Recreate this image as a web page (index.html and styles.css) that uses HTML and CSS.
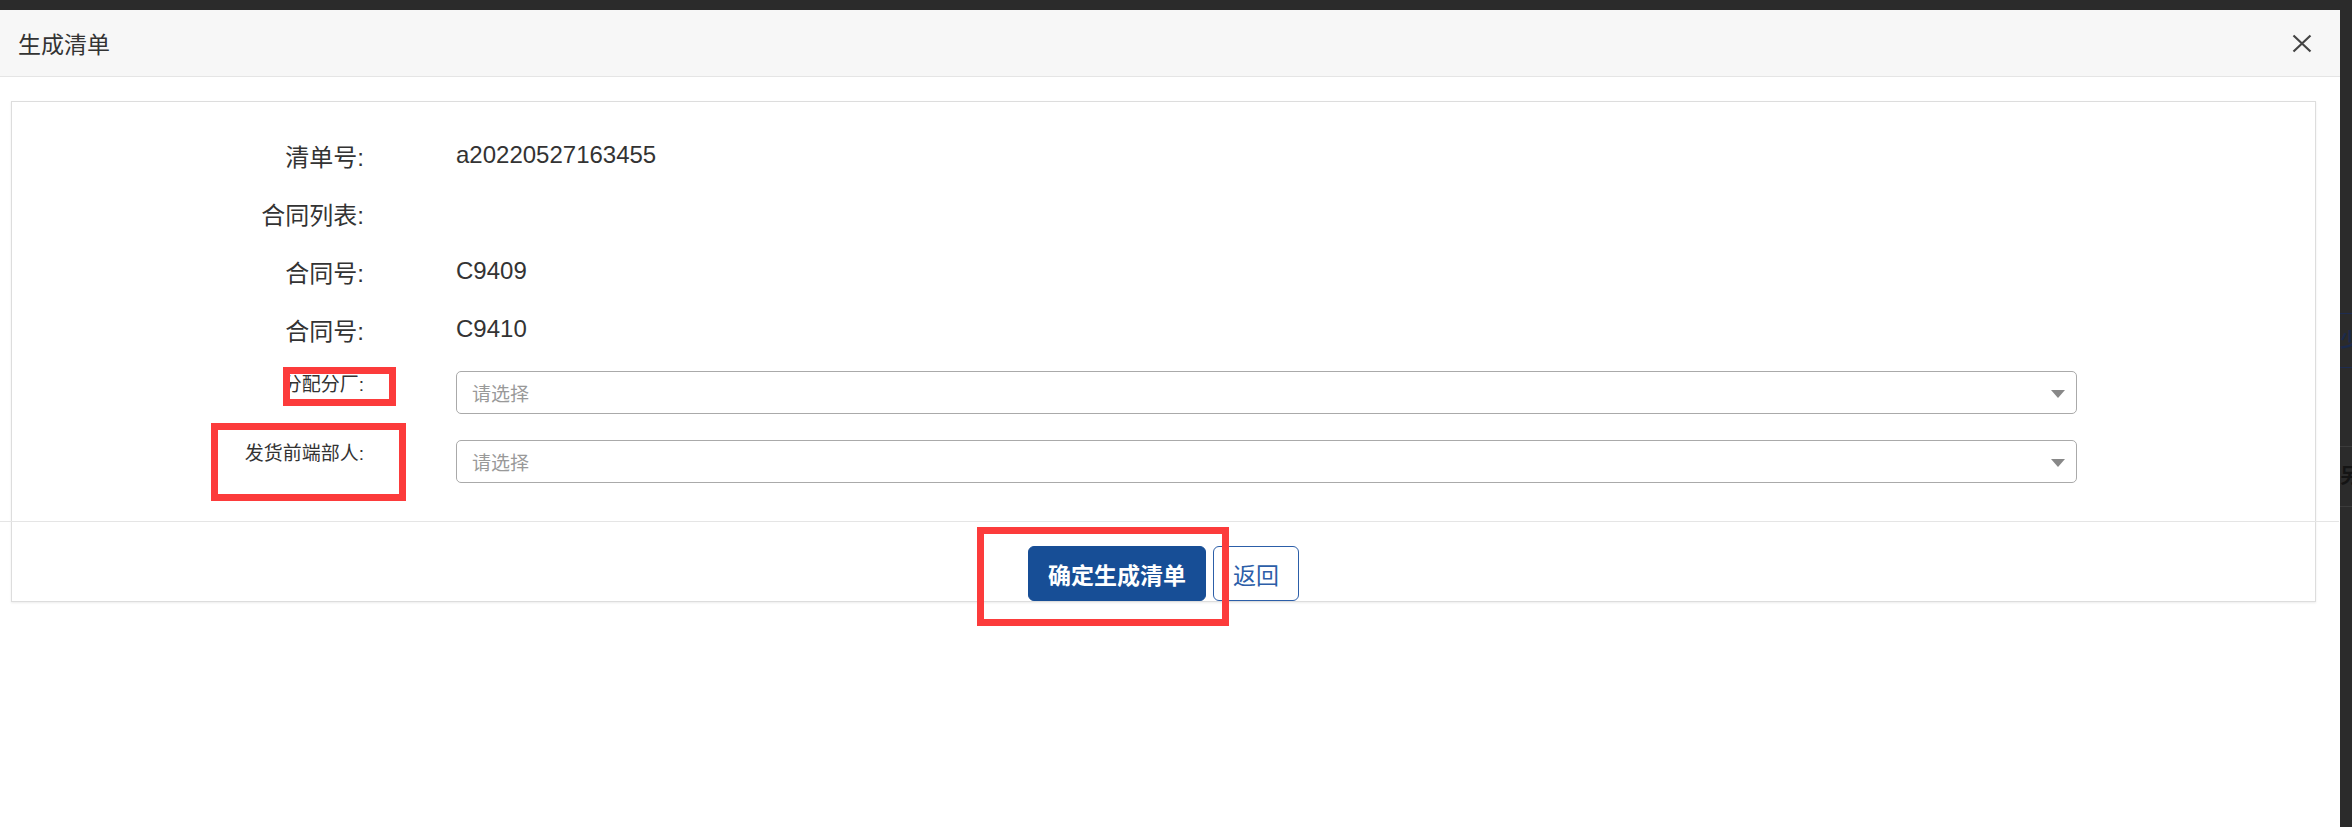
FILE: index.html
```html
<!DOCTYPE html>
<html lang="zh-CN">

<head>
    <meta charset="UTF-8">
    <meta name="viewport" content="width=device-width, initial-scale=1.0">
    <title>生成清单</title>
    <link rel="stylesheet" href="styles.css">
</head>

<body>
    <div class="screen">
        <div class="modal">
            <div class="modal-header">
                <h4 class="modal-title">生成清单</h4>
                <button class="close" type="button" aria-label="关闭">
                    <svg width="20" height="19" viewBox="0 0 20 19">
                        <path d="M1.5 1.5 L18.5 17.5 M18.5 1.5 L1.5 17.5" stroke="#444" stroke-width="2.2" fill="none" />
                    </svg>
                </button>
            </div>

            <div class="modal-body">
                <div class="panel">
                    <div class="form">
                        <div class="row">
                            <label>清单号:</label>
                            <span class="value">a20220527163455</span>
                        </div>
                        <div class="row">
                            <label>合同列表:</label>
                            <span class="value"></span>
                        </div>
                        <div class="row">
                            <label>合同号:</label>
                            <span class="value">C9409</span>
                        </div>
                        <div class="row">
                            <label>合同号:</label>
                            <span class="value">C9410</span>
                        </div>
                        <div class="row row-select">
                            <label>分配分厂:</label>
                            <div class="select">
                                <span class="placeholder">请选择</span>
                                <span class="caret"></span>
                            </div>
                        </div>
                        <div class="row row-select">
                            <label>发货前端部人:</label>
                            <div class="select">
                                <span class="placeholder">请选择</span>
                                <span class="caret"></span>
                            </div>
                        </div>
                    </div>

                    <div class="panel-footer">
                        <button class="btn btn-primary" type="button">确定生成清单</button>
                        <button class="btn btn-default" type="button">返回</button>
                    </div>
                </div>
            </div>
        </div>

        <!-- page behind the dialog, only a sliver shows -->
        <div class="side">
            <div class="side-gap"></div>
            <div class="side-tab">少</div>
            <div class="side-gap side-gap-sm"></div>
            <div class="side-cell">另</div>
        </div>
    </div>

    <!-- red annotation boxes -->
    <div class="mark mark-factory"></div>
    <div class="mark mark-person"></div>
    <div class="mark mark-submit"></div>
</body>

</html>
```

FILE: styles.css
```css
body {
    margin: 0;
    padding: 0;
    height: 827px;
    overflow: hidden;
    background: #2b2b2b;
    font-family: "Liberation Sans", "Noto Sans CJK SC", sans-serif;
    color: #333;
}

.screen {
    display: flex;
    height: 827px;
    padding-top: 10px;
    box-sizing: border-box;
}

.modal {
    flex: none;
    width: 2340px;
    background: #fff;
}

.modal-header {
    height: 66px;
    display: flex;
    align-items: center;
    justify-content: space-between;
    padding: 0 28px 0 18px;
    background: #f7f7f7;
    border-bottom: 1px solid #e5e5e5;
}

.modal-title {
    margin: 0;
    font-size: 23px;
    font-weight: normal;
    color: #333;
}

.close {
    display: flex;
    padding: 0;
    border: none;
    background: none;
    cursor: pointer;
}

.modal-body {
    padding: 24px 24px 0 11px;
}

.panel {
    border: 1px solid #ddd;
    box-shadow: 0 1px 2px rgba(0, 0, 0, 0.08);
}

.form {
    padding: 24px 0 38px;
}

.row {
    display: grid;
    grid-template-columns: 352px 1621px;
    column-gap: 92px;
    align-items: center;
    height: 58px;
    font-size: 24px;
}

.row label {
    text-align: right;
}

.row-select {
    height: auto;
    align-items: start;
    margin-top: 13px;
}

.row-select + .row-select {
    margin-top: 26px;
}

.row-select label {
    font-size: 19px;
    line-height: 28px;
}

.select {
    height: 43px;
    box-sizing: border-box;
    display: flex;
    align-items: center;
    justify-content: space-between;
    padding: 0 11px 0 15px;
    border: 1px solid #aaa;
    border-radius: 5px;
}

.placeholder {
    font-size: 19px;
    color: #999;
}

.caret {
    width: 0;
    height: 0;
    margin-top: 3px;
    border-left: 7px solid transparent;
    border-right: 7px solid transparent;
    border-top: 8px solid #888;
}

.panel-footer {
    display: flex;
    justify-content: center;
    gap: 7px;
    margin: 0 -24px 0 -12px;
    padding: 24px 24px 0 12px;
    border-top: 1px solid #e5e5e5;
}

.btn {
    height: 55px;
    padding: 0 19px;
    border-radius: 6px;
    font-family: inherit;
    font-size: 23px;
    cursor: pointer;
}

.btn-primary {
    background: #174e96;
    border: 1px solid #174e96;
    color: #fff;
    font-weight: bold;
}

.btn-default {
    background: #fff;
    border: 1px solid #2c5ea8;
    color: #2c5ea8;
}

.side {
    flex: none;
    width: 12px;
    overflow: hidden;
    background: #2b2b2b;
    font-size: 20px;
    font-weight: bold;
    white-space: nowrap;
}

.side-gap {
    height: 303px;
}

.side-gap-sm {
    height: 78px;
}

.side-tab {
    height: 53px;
    line-height: 53px;
    color: #1b2a4c;
    border-top: 1px solid #1d2c50;
    border-bottom: 1px solid #1d2c50;
}

.side-cell {
    height: 59px;
    line-height: 59px;
    color: #141414;
    border-top: 1px solid #3b3b3b;
    border-bottom: 1px solid #3b3b3b;
}

.mark {
    position: absolute;
    box-sizing: border-box;
    border: 7px solid #fc3b3b;
}

.mark-factory {
    left: 283px;
    top: 367px;
    width: 113px;
    height: 39px;
}

.mark-person {
    left: 211px;
    top: 423px;
    width: 195px;
    height: 78px;
}

.mark-submit {
    left: 977px;
    top: 527px;
    width: 252px;
    height: 99px;
}
```
